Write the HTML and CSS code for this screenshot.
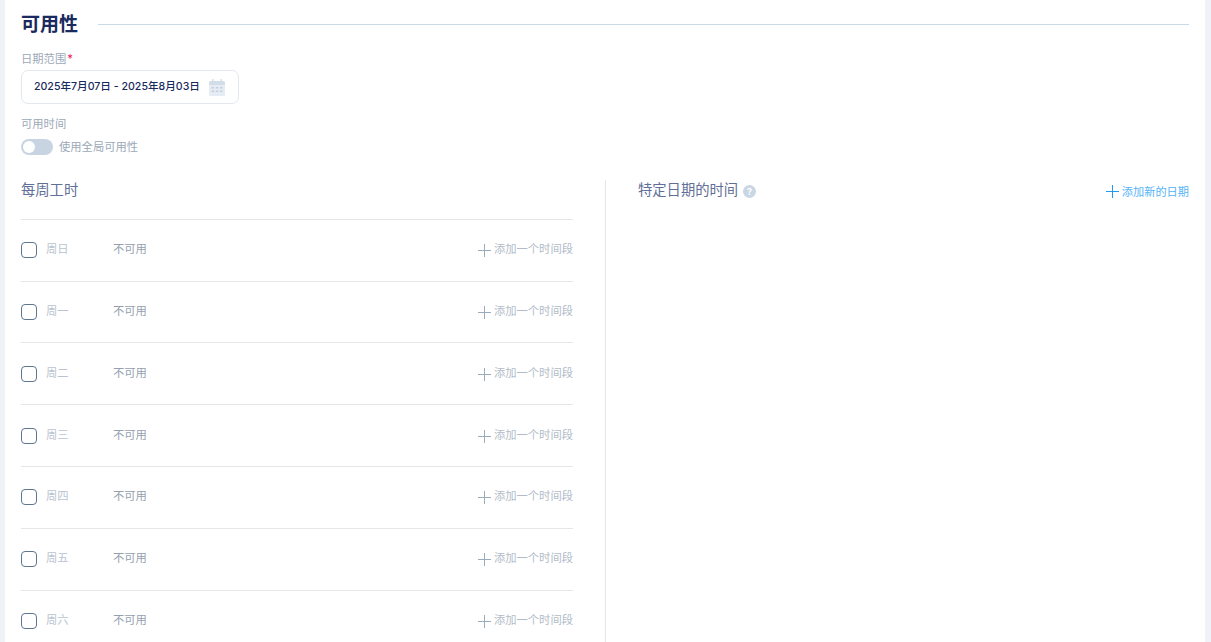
FILE: index.html
```html
<!DOCTYPE html>
<html lang="zh">
<head>
<meta charset="utf-8">
<title>可用性</title>
<link rel="stylesheet" href="styles.css">
</head>
<body>
<main class="card">
  <header class="section-head">
    <h1 class="section-title">可用性</h1>
    <div class="section-rule"></div>
  </header>
  <div class="field-label">日期范围<span class="req">*</span></div>
  <div class="date-input">
    <span class="date-text">2025年7月07日 - 2025年8月03日</span>
    <svg class="cal" viewBox="0 0 16 17" width="16" height="17"><path fill="#d3dde8" d="M3 0h1.500v2h7V0H13v2h1.500A1.500 1.500 0 0 1 16 3.500V6H0V3.500A1.500 1.500 0 0 1 1.500 2H3z"/><path fill="#e6ecf3" d="M0 6h16v9.500a1.500 1.500 0 0 1-1.500 1.500h-13A1.500 1.500 0 0 1 0 15.500z"/><path fill="#c3d0de" d="M2.500 8h2.500v1.500H2.500zM6.750 8h2.500v1.500h-2.500zM11 8h2.500v1.500H11zM2.500 11.500h2.500V13H2.500zM6.750 11.500h2.500V13h-2.500zM11 11.500h2.500V13H11z"/></svg>
  </div>
  <div class="field-label avail-label">可用时间</div>
  <div class="toggle-row">
    <span class="toggle"><span class="knob"></span></span>
    <span class="toggle-text">使用全局可用性</span>
  </div>
  <div class="columns">
    <section class="col-left">
      <h2 class="col-title">每周工时</h2>
      <div class="rows">
        <div class="row"><span class="check"></span><span class="day">周日</span><span class="na">不可用</span><span class="add"><svg class="plus" viewBox="0 0 13 13" width="13" height="13"><path d="M6.500 0v13M0 6.500h13" fill="none"/></svg>添加一个时间段</span></div>
        <div class="row"><span class="check"></span><span class="day">周一</span><span class="na">不可用</span><span class="add"><svg class="plus" viewBox="0 0 13 13" width="13" height="13"><path d="M6.500 0v13M0 6.500h13" fill="none"/></svg>添加一个时间段</span></div>
        <div class="row"><span class="check"></span><span class="day">周二</span><span class="na">不可用</span><span class="add"><svg class="plus" viewBox="0 0 13 13" width="13" height="13"><path d="M6.500 0v13M0 6.500h13" fill="none"/></svg>添加一个时间段</span></div>
        <div class="row"><span class="check"></span><span class="day">周三</span><span class="na">不可用</span><span class="add"><svg class="plus" viewBox="0 0 13 13" width="13" height="13"><path d="M6.500 0v13M0 6.500h13" fill="none"/></svg>添加一个时间段</span></div>
        <div class="row"><span class="check"></span><span class="day">周四</span><span class="na">不可用</span><span class="add"><svg class="plus" viewBox="0 0 13 13" width="13" height="13"><path d="M6.500 0v13M0 6.500h13" fill="none"/></svg>添加一个时间段</span></div>
        <div class="row"><span class="check"></span><span class="day">周五</span><span class="na">不可用</span><span class="add"><svg class="plus" viewBox="0 0 13 13" width="13" height="13"><path d="M6.500 0v13M0 6.500h13" fill="none"/></svg>添加一个时间段</span></div>
        <div class="row"><span class="check"></span><span class="day">周六</span><span class="na">不可用</span><span class="add"><svg class="plus" viewBox="0 0 13 13" width="13" height="13"><path d="M6.500 0v13M0 6.500h13" fill="none"/></svg>添加一个时间段</span></div>
      </div>
    </section>
    <section class="col-right">
      <div class="right-head">
        <h2 class="col-title">特定日期的时间<span class="help">?</span></h2>
        <span class="add-date"><svg class="plus" viewBox="0 0 13 13" width="13" height="13"><path d="M6.500 0v13M0 6.500h13" fill="none"/></svg>添加新的日期</span>
      </div>
    </section>
  </div>
</main>
</body>
</html>
```
FILE: styles.css
```css
* { box-sizing: border-box; }
html, body { margin: 0; height: 100%; overflow: hidden; }
body {
  background: #eff3f8;
  font-family: Inter, "Noto Sans CJK SC", sans-serif;
  padding: 0 6px 0 5px;
}
.card {
  background: #fff;
  height: 642px;
  padding: 0 16px;
  overflow: hidden;
}
.section-head {
  display: flex;
  align-items: center;
  height: 49px;
}
.section-title {
  margin: 0 20px 0 0;
  font-size: 19px;
  font-weight: 700;
  line-height: 49px;
  color: #1a2a5e;
}
.section-rule { flex: 1; height: 1px; background: #c9d9e6; }
.field-label {
  font-size: 11.300px;
  line-height: 18px;
  padding-top: 1px;
  height: 19px;
  color: #9ca9b8;
}
.req { color: #f0145a; margin-left: 1px; }
.date-input {
  display: flex;
  align-items: center;
  justify-content: space-between;
  width: 218px;
  height: 34px;
  margin-top: 2px;
  padding: 0 13px 2px 12px;
  border: 1px solid #e2e8ee;
  border-radius: 7px;
}
.date-text {
  font-size: 10.600px;
  font-weight: 500;
  color: #1a2a5e;
  white-space: nowrap;
  margin-bottom: 2px;
}
.cal { flex: none; margin-top: 3px; }
.avail-label { margin-top: 11px; padding-top: 0; }
.toggle-row { display: flex; align-items: center; gap: 6px; margin-top: 5px; height: 16px; }
.toggle {
  display: flex;
  align-items: center;
  width: 32px;
  height: 16px;
  padding: 0 2px;
  background: #c8d4e1;
  border-radius: 8px;
}
.knob { width: 12px; height: 12px; background: #fff; border-radius: 50%; }
.toggle-text { font-size: 11.300px; margin-bottom: 2px; color: #9ca9b8; }
.columns { display: flex; margin-top: 25px; }
.col-left { width: 552px; flex: none; }
.col-title {
  margin: 0;
  font-size: 14.300px;
  font-weight: 400;
  line-height: 20px;
  color: #616f98;
}
.rows { margin-top: 18.800px; }
.row {
  display: flex;
  align-items: center;
  height: 61.800px;
  border-top: 1px solid #e4e6e9;
}
.check {
  width: 16px;
  height: 16px;
  border: 1px solid #5e7690;
  border-radius: 4px;
}
.day { width: 67px; margin-left: 9px; margin-bottom: 4px; font-size: 11.300px; color: #bac4d0; }
.na { font-size: 11.300px; margin-bottom: 4px; color: #959fae; }
.add {
  margin-left: auto;
  display: flex;
  align-items: center;
  padding-bottom: 2px;
  font-size: 11.300px;
  line-height: 14px;
  color: #b2bcc8;
}
.add .plus { margin-top: 3px; stroke: #9aabbc; }
.plus { margin-right: 3px; flex: none; }
.col-right {
  flex: 1;
  margin-left: 32px;
  padding-left: 32px;
  border-left: 1px solid #e4e6e9;
  height: 470px;
}
.right-head { display: flex; justify-content: space-between; align-items: center; }
.right-head .col-title { display: flex; align-items: center; }
.help {
  width: 13px;
  height: 13px;
  margin-left: 5px;
  margin-top: 2px;
  border-radius: 50%;
  background: #c9d6e5;
  color: #fff;
  font-size: 9px;
  font-weight: 700;
  line-height: 13px;
  text-align: center;
}
.add-date { display: flex; align-items: center; font-size: 11.200px; margin-top: 2px; color: #55b4f7; }
.add-date .plus { stroke: #1e9af0; }
```
